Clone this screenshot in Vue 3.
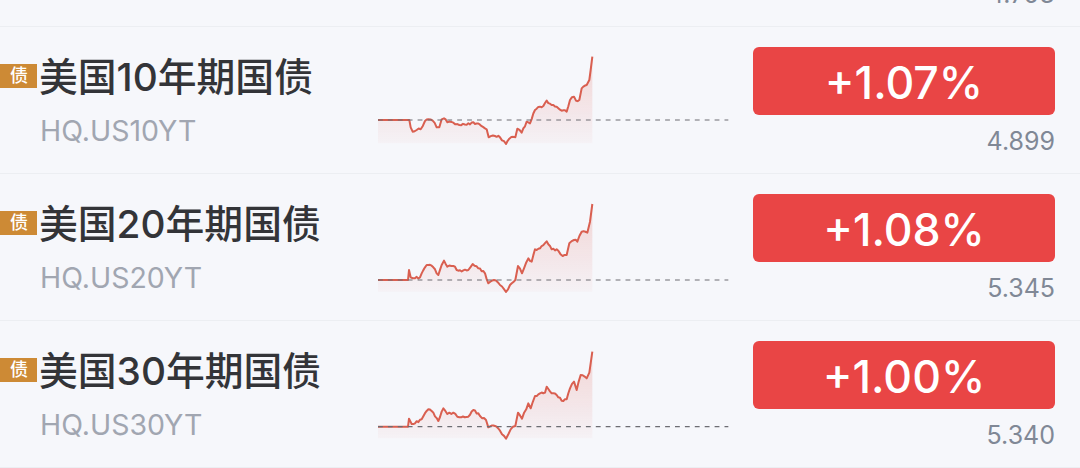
<template>
  <div class="page">
    <div class="top-row">
      <div class="price">4.793</div>
    </div>
    <div v-for="item in rows" :key="item.code" class="row">
      <div class="info">
        <div class="name-line">
          <span class="tag">债</span>
          <span class="name">{{ item.name }}</span>
        </div>
        <div class="code">{{ item.code }}</div>
      </div>
      <svg class="chart" viewBox="0 0 1110 360">
        <defs>
          <linearGradient :id="'fill' + item.code" x1="0" y1="0" x2="0" y2="1">
            <stop offset="0" stop-color="#e2574c" stop-opacity="0.22" />
            <stop offset="1" stop-color="#e2574c" stop-opacity="0.03" />
          </linearGradient>
        </defs>
        <path :d="item.area" :fill="'url(#fill' + item.code + ')'" />
        <path :d="item.line" class="line" />
        <line x1="24" x2="1075" :y1="item.base" :y2="item.base" class="base" />
      </svg>
      <div class="quote">
        <div class="change">{{ item.change }}</div>
        <div class="price">{{ item.price }}</div>
      </div>
    </div>
  </div>
</template>

<script setup>
// 折线锚点，坐标系与 viewBox 一致
const points10 = [[24,240],[118,240],[122,262],[128,275],[140,270],[152,268],[165,243],[175,238],[188,242],[200,262],[208,262],[215,238],[222,235],[232,247],[250,248],[268,255],[290,254],[310,247],[330,254],[350,268],[356,292],[375,288],[390,292],[408,312],[418,296],[436,292],[442,266],[455,278],[470,245],[480,250],[495,210],[510,200],[520,198],[530,182],[545,195],[560,200],[575,212],[590,215],[600,180],[612,170],[618,182],[628,180],[635,145],[650,135],[658,120],[662,90],[667,50]]
const points20 = [[24,270],[114,270],[117,240],[122,262],[135,265],[150,262],[165,232],[175,225],[190,232],[205,255],[215,225],[222,212],[232,230],[250,228],[265,242],[295,240],[308,222],[325,235],[345,250],[355,280],[372,270],[390,285],[408,306],[420,285],[436,270],[444,228],[456,250],[475,205],[485,215],[495,178],[510,175],[530,154],[545,178],[565,182],[578,198],[590,195],[598,160],[612,150],[622,155],[635,125],[652,128],[660,95],[667,42]]
const points30 = [[24,260],[114,260],[117,236],[125,252],[135,250],[155,238],[175,208],[190,218],[205,243],[220,205],[232,222],[250,218],[268,232],[295,230],[310,210],[330,228],[348,240],[355,262],[375,258],[390,272],[408,296],[422,268],[436,258],[444,218],[456,236],[475,190],[482,205],[495,168],[510,160],[525,158],[530,140],[545,160],[560,165],[575,182],[590,178],[600,145],[612,125],[620,150],[632,105],[650,115],[658,98],[667,35]]

// 分时线有细碎抖动，锚点之间补几个带偏移的点
function buildLine(points, dy) {
  let seed = 7
  const out = []
  points.forEach((p, i) => {
    if (i > 1 && i < points.length - 1) {
      const prev = points[i - 1]
      const steps = Math.max(1, Math.floor((p[0] - prev[0]) / 5))
      for (let s = 1; s < steps; s++) {
        seed = (seed * 37 + 11) % 101
        const x = prev[0] + ((p[0] - prev[0]) * s) / steps
        const y = prev[1] + ((p[1] - prev[1]) * s) / steps + (seed / 101 - 0.5) * 7
        out.push([x.toFixed(1), y.toFixed(1)])
      }
    }
    out.push(p)
  })
  return out.map((p, i) => (i ? 'L' : 'M') + p[0] + ' ' + (Number(p[1]) + dy).toFixed(1)).join(' ')
}

function buildRow(name, code, change, price, points, base, bottom, dy) {
  const line = buildLine(points, dy)
  const area = line + ' L667 ' + (bottom + dy) + ' L24 ' + (bottom + dy) + ' Z'
  return { name, code, change, price, line, area, base: base + dy }
}

const rows = [
  buildRow('美国10年期国债', 'HQ.US10YT', '+1.07%', '4.899', points10, 240, 310, 0),
  buildRow('美国20年期国债', 'HQ.US20YT', '+1.08%', '5.345', points20, 270, 305, 9),
  buildRow('美国30年期国债', 'HQ.US30YT', '+1.00%', '5.340', points30, 260, 295, 18)
]
</script>

<style scoped>
.page {
  width: 1080px;
  height: 468px;
  overflow: hidden;
  background: #f6f7fb;
  font-family: Inter, "Noto Sans CJK SC", sans-serif;
}

.top-row {
  display: flex;
  justify-content: flex-end;
  align-items: flex-end;
  height: 27px;
  padding-right: 25px;
  padding-bottom: 16px;
  box-sizing: border-box;
  border-bottom: 1px solid #eceef2;
}

.row {
  display: flex;
  height: 147px;
  box-sizing: border-box;
  border-bottom: 1px solid #eceef2;
}

.info {
  width: 370px;
  padding-top: 25px;
  box-sizing: border-box;
}

.name-line {
  display: flex;
  align-items: center;
  height: 46px;
}

.tag {
  width: 37px;
  height: 24px;
  margin-top: 2px;
  margin-right: 2px;
  background: #cd8a35;
  color: #fff;
  font-size: 18px;
  font-weight: 500;
  line-height: 24px;
  text-align: right;
  padding-right: 9px;
  box-sizing: border-box;
}

.name {
  margin-top: 3px;
  font-size: 38.8px;
  font-weight: 500;
  line-height: 46px;
  color: #333438;
}

.code {
  margin-top: 17px;
  margin-left: 40px;
  font-size: 28.5px;
  line-height: 32px;
  color: #a1a6b1;
}

.chart {
  width: 370px;
  height: 120px;
  margin-top: 13px;
  flex-shrink: 0;
  filter: blur(0.3px);
}

.line {
  fill: none;
  stroke: #d95f50;
  stroke-width: 6;
  stroke-linejoin: round;
}

.base {
  stroke: #6d6d73;
  stroke-width: 3.5;
  stroke-dasharray: 14.5 15.2;
}

.quote {
  width: 302px;
  margin-left: 13px;
  padding-top: 20px;
}

.change {
  height: 68px;
  border-radius: 6px;
  background: #e94545;
  color: #fff;
  font-size: 44.6px;
  font-weight: 500;
  line-height: 73px;
  text-align: center;
}

.price {
  margin-top: 10px;
  font-size: 25px;
  line-height: 32px;
  text-align: right;
  color: #808896;
}

.top-row .price {
  margin-top: 0;
}
</style>
